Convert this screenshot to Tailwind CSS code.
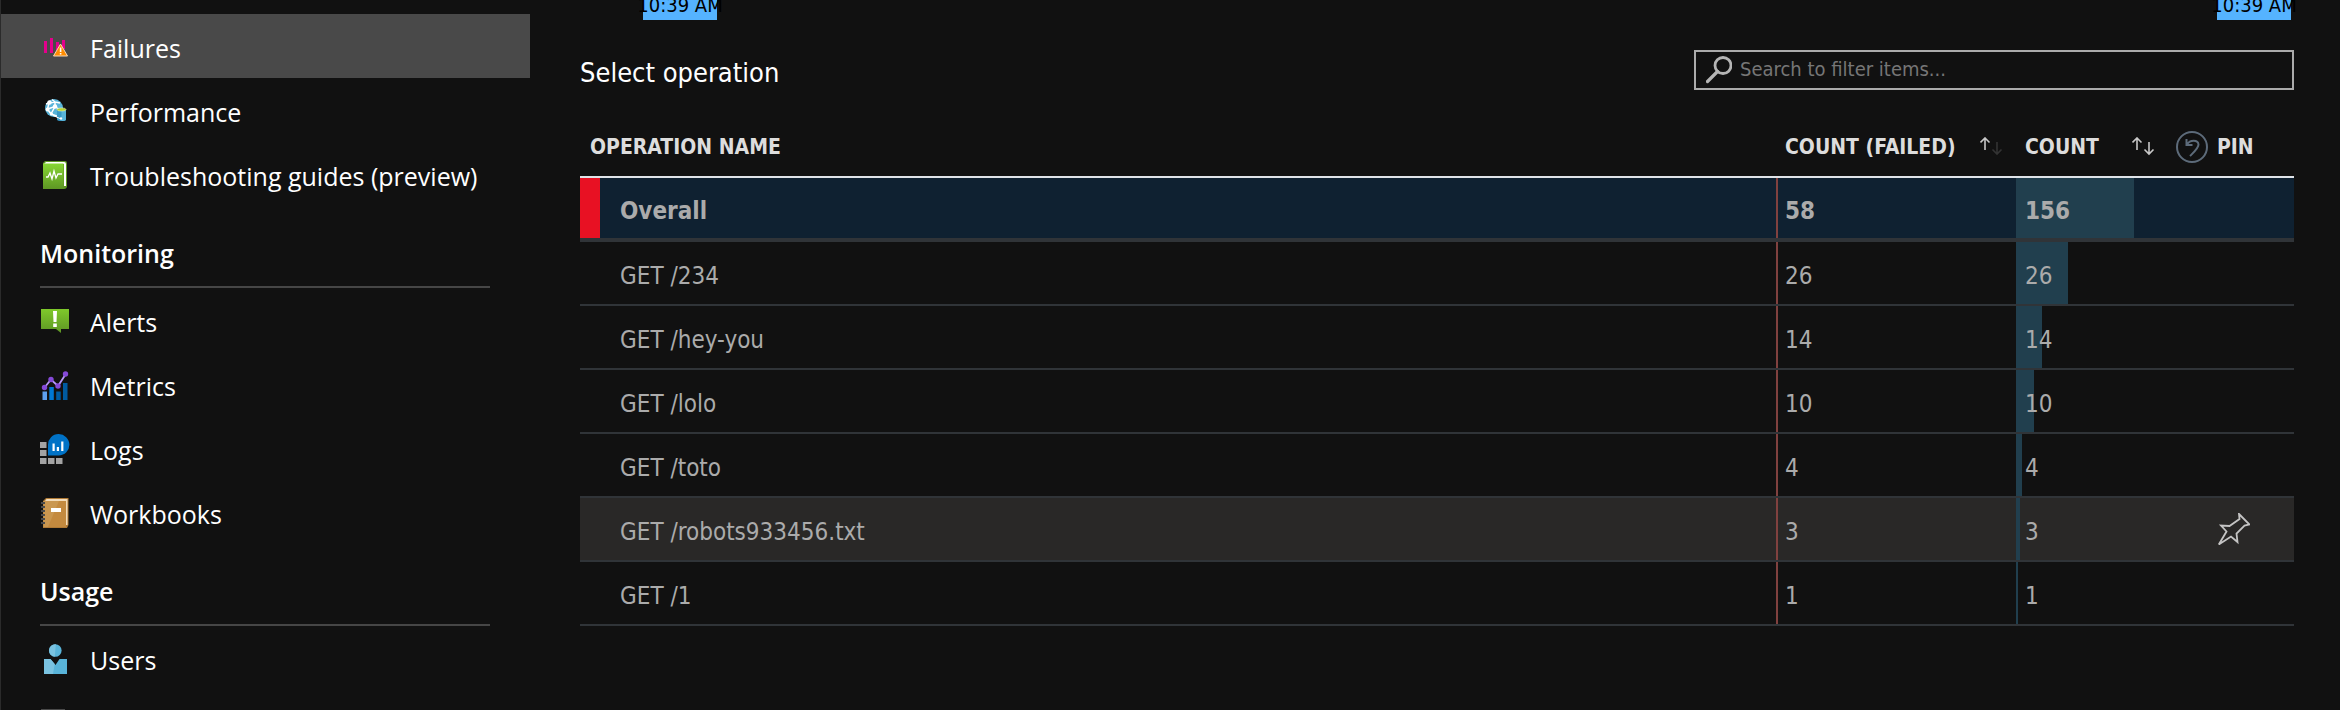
<!DOCTYPE html>
<html lang="en">
<head>
<meta charset="utf-8">
<title>Failures</title>
<script src="https://cdn.jsdelivr.net/npm/@tailwindcss/browser@4"></script>
</head>
<body class="flex h-screen overflow-hidden bg-[#111111] text-white font-['Open_Sans','Noto_Sans',sans-serif]">

<nav class="w-[530px] shrink-0 border-l border-[#2b2b2b] pt-3.5 text-[25px]" aria-label="Resource menu">
  <ul>
    <li><a href="#failures" aria-current="page" class="flex h-16 items-center gap-5 bg-[#494949] pl-[39px] pt-0.5">
      <svg class="size-[30px] shrink-0" viewBox="0 0 30 30" aria-hidden="true">
        <path fill="#e3008c" d="M4 9h3v12H4zM10 6h3v15h-3zM16 10h3v8h-3zM22 8h3v9h-3z"/>
        <path d="M20.500 12 27.500 24h-14z" fill="#ff8c00" stroke="#f9d9b5" stroke-width="1" stroke-linejoin="round"/>
        <path d="M19.800 15.500h1.600v4.500h-1.600zM19.800 21h1.600v1.600h-1.600z" fill="#fff"/>
      </svg><span class="pt-1">Failures</span></a></li>
    <li><a href="#performance" class="flex h-16 items-center gap-5 pl-[39px] pt-0.5">
      <svg class="size-[30px] shrink-0" viewBox="0 0 30 30" aria-hidden="true">
        <circle cx="14" cy="12" r="9" fill="#59b4d9"/>
        <path d="M9 7 15 6 20 7M9 7 7.500 13 15 10.500 20 14M15 6 15 10.500M7.500 13 11 18 18 20.500M15 10.500 11 18M12 3.500 15 6M9 7 6 8" fill="none" stroke="#fff" stroke-width="1.500"/>
        <g fill="#fff"><circle cx="9.500" cy="6.500" r="2.200"/><circle cx="15" cy="10.500" r="2.200"/><circle cx="7.500" cy="13.500" r="1.900"/><circle cx="11.500" cy="18" r="1.600"/></g>
        <path d="M17 14v9.500c0 2 9 2 9 0V14z" fill="#3999c6"/><path d="M21.500 14v11c2.500 0 4.500-.5 4.500-1.500V14z" fill="#59b4d9"/>
        <ellipse cx="21.500" cy="13.500" rx="4.500" ry="1.600" fill="#b8d432" stroke="#e8f3c2" stroke-width=".6"/>
        <path d="M13 19.500 20 22.500" stroke="#fff" stroke-width="1"/><circle cx="21" cy="22.500" r="1.200" fill="#fff"/>
      </svg><span class="pt-1">Performance</span></a></li>
    <li><a href="#guides" class="flex h-16 items-center gap-5 pl-[39px] pt-0.5">
      <svg class="size-[30px] shrink-0" viewBox="0 0 30 30" aria-hidden="true">
        <defs><linearGradient id="book" x1="0" y1="0" x2="0" y2="1"><stop offset="0" stop-color="#86d633"/><stop offset="1" stop-color="#5e9624"/></linearGradient></defs>
        <path d="M5 1h20q2 0 2 2v23q0 3-3 3H3V3z" fill="#5e9624"/>
        <path d="M6 2h18q2 0 2 2v22h-2V4H4z" fill="#fff"/>
        <path d="M3 3.500h20.500V29H3z" fill="url(#book)"/>
        <path d="M6 17h2l2-4 2 6 2-8 2 7 2-4h4" fill="none" stroke="#fff" stroke-width="1.300"/>
      </svg><span class="pt-1">Troubleshooting guides (preview)</span></a></li>
  </ul>

  <h2 class="ml-[39px] mr-10 flex h-[82px] items-end border-b-2 border-[#464646] pb-3.5 font-semibold">Monitoring</h2>
  <ul>
    <li><a href="#alerts" class="flex h-16 items-center gap-5 pl-[39px] pt-0.5">
      <svg class="size-[30px] shrink-0" viewBox="0 0 30 30" aria-hidden="true">
        <defs><linearGradient id="alert" x1="0" y1="0" x2="0" y2="1"><stop offset="0" stop-color="#7fc92b"/><stop offset="1" stop-color="#5e9624"/></linearGradient></defs>
        <path d="M1 3h28v20h-8v4l-5-4H1z" fill="url(#alert)"/>
        <path d="M13 5h4l-.5 11h-3zM13.200 17.500h3.600V21h-3.600z" fill="#fff"/>
      </svg><span class="pt-1">Alerts</span></a></li>
    <li><a href="#metrics" class="flex h-16 items-center gap-5 pl-[39px] pt-0.5">
      <svg class="size-[30px] shrink-0" viewBox="0 0 30 30" aria-hidden="true">
        <path fill="#5ea0ef" d="M2.500 21.500h4.500V30H2.500z"/><path fill="#0078d4" d="M9.300 17h4.500v13H9.300z"/><path fill="#005ba1" d="M16.200 21.500h4.500V30h-4.500zM23 13h4.500v17H23z"/>
        <path d="M4.500 17.500 11 9.500 18 16 25.500 4.500" fill="none" stroke="#b796f9" stroke-width="1.800"/>
        <g fill="#8549d8"><circle cx="4.500" cy="17.500" r="2.700"/><circle cx="11" cy="9.500" r="2.700"/><circle cx="18" cy="16" r="2.700"/><circle cx="25.500" cy="4" r="2.700"/></g>
      </svg><span class="pt-1">Metrics</span></a></li>
    <li><a href="#logs" class="flex h-16 items-center gap-5 pl-[39px] pt-0.5">
      <svg class="size-[30px] shrink-0" viewBox="0 0 30 30" aria-hidden="true">
        <path fill="#a3a3a3" d="M0 8h6.500v6H0zM0 16h6.500v6H0zM0 24h6.500v6H0zM8 24h6.500v6H8zM16 24h6.500v6H16z"/>
        <path d="M8 21.500V11A10.700 10.700 0 1 1 18.700 21.500z" fill="#0072c6"/>
        <path fill="#fff" d="M12.500 9.500h2.200V17h-2.200zM16.800 13H19v4h-2.200zM21.200 7.500h2.200V17h-2.200z"/>
      </svg><span class="pt-1">Logs</span></a></li>
    <li><a href="#workbooks" class="flex h-16 items-center gap-5 pl-[39px] pt-0.5">
      <svg class="size-[30px] shrink-0" viewBox="0 0 30 30" aria-hidden="true">
        <path d="M6 0h22.500v27L27 30H3V3z" fill="#b07a35"/>
        <path d="M6.500 1H27.500V27h-2V3H5z" fill="#f3dcba"/>
        <path d="M3.500 3h22.500V29H3.500z" fill="#c48a3f"/><path d="M3.500 3H19L8 29H3.500z" fill="#ca9750"/>
        <path d="M11 10h10v4H11z" fill="#fff"/>
        <path d="M1 5h4M1 9h4M1 13h4M1 17h4M1 21h4M1 25h4" stroke="#4a4a4a" stroke-width="2"/>
      </svg><span class="pt-1">Workbooks</span></a></li>
  </ul>

  <h2 class="ml-[39px] mr-10 flex h-[82px] items-end border-b-2 border-[#464646] pb-3.5 font-semibold">Usage</h2>
  <ul>
    <li><a href="#users" class="flex h-16 items-center gap-5 pl-[39px] pt-0.5">
      <svg class="size-[30px] shrink-0" viewBox="0 0 30 30" aria-hidden="true">
        <circle cx="15.300" cy="6.500" r="6.300" fill="#59b4d9"/><path d="M15.800.2a6.300 6.300 0 1 0-1 12.600z" fill="#7ac3e1"/>
        <path d="M4 15h6.500l5 6 4-6H27v15H4z" fill="#59b4d9"/><path d="M4 15h6.500l4.200 5L13 30H4z" fill="#7ac3e1"/>
      </svg><span class="pt-1">Users</span></a></li>
    <li><a href="#sessions" aria-label="Sessions" class="flex h-16 items-center gap-5 pl-[39px] pt-0.5">
      <svg class="size-[30px] shrink-0" viewBox="0 0 30 30" aria-hidden="true"><path d="M1 1h24v28H1z" fill="#4a4a4a"/></svg></a></li>
  </ul>
</nav>

<main class="min-w-0 flex-1 pl-[50px] pr-[46px] font-['DejaVu_Sans_Condensed','DejaVu_Sans',sans-serif] [font-stretch:condensed]">
  <div class="-mt-2 flex h-7 justify-between pl-[63px] pr-[3px] text-xl leading-[26px] text-black">
    <div class="flex w-[74px] justify-center whitespace-nowrap bg-[#55b3ff]"><span>10:39 AM</span></div>
    <div class="flex w-[74px] justify-center whitespace-nowrap bg-[#55b3ff]"><span>10:39 AM</span></div>
  </div>

  <div class="mt-[30px] flex h-10 items-center justify-between">
    <h1 class="pt-1.5 text-[27px] leading-10">Select operation</h1>
    <label class="flex h-10 w-[600px] items-center gap-2 border-2 border-[#ababab] px-2.5">
      <svg class="h-7 w-[26px] shrink-0" viewBox="0 0 26 28" fill="none" stroke="#b5b5b5" aria-hidden="true"><circle cx="17" cy="9.500" r="8" stroke-width="2.800"/><path d="M11.500 15.500 1.500 25.500" stroke-width="3.200" stroke-linecap="round"/></svg>
      <input type="search" aria-label="Search to filter items" placeholder="Search to filter items..." class="min-w-0 flex-1 bg-transparent pb-0.5 text-xl text-white outline-none placeholder:text-[#767676]">
    </label>
  </div>

  <table class="mt-7 w-full table-fixed border-separate border-spacing-0 text-left text-2xl text-[#ababab]">
    <colgroup><col><col class="w-[240px]"><col class="w-[194px]"><col class="w-[84px]"></colgroup>
    <thead class="text-[21px] text-[#dddddd]">
      <tr class="h-[60px] *:border-b-2 *:border-[#dfe3e8]">
        <th scope="col" class="p-0 pl-2.5 font-bold">OPERATION NAME</th>
        <th scope="col" class="p-0 pl-[9px] pr-3 font-bold">
          <button type="button" class="flex w-full items-center justify-between"><span>COUNT (FAILED)</span>
          <svg class="h-5 w-6" viewBox="0 0 24 20" fill="none" stroke-width="1.600" aria-hidden="true"><path stroke="#c8c8c8" d="M5 13V1M.5 5.500 5 1l4.500 4.500"/><path stroke="#333" d="M17 5v12M12.500 12.500 17 17l4.500-4.500"/></svg></button></th>
        <th scope="col" class="p-0 pl-[9px] font-bold">
          <div class="flex items-center justify-between pr-0.5"><button type="button" class="flex w-[131px] items-center justify-between"><span>COUNT</span>
          <svg class="h-5 w-6" viewBox="0 0 24 20" fill="none" stroke="#c8c8c8" stroke-width="1.600" aria-hidden="true"><path d="M5 13V1M.5 5.500 5 1l4.500 4.500M17 5v12M12.500 12.500 17 17l4.500-4.500"/></svg></button>
          <button type="button" aria-label="Reset sort"><svg class="size-8" viewBox="0 0 32 32" fill="none" stroke="#5d6b7a" stroke-width="2" aria-hidden="true"><circle cx="16" cy="16" r="15"/><path d="M10.500 8v6h6M11 13.500C14 8.500 22 8.500 22.500 13.500 22.500 17 19 20 14 25"/></svg></button></div></th>
        <th scope="col" class="p-0 pl-[7px] font-bold">PIN</th>
      </tr>
    </thead>
    <tbody>
      <tr class="h-16 bg-[#0f2131] font-bold *:border-b-4 *:border-[#303438]">
        <td class="p-0"><div class="flex h-15 items-center border-l-20 border-[#e81123] pl-5 pt-1.5">Overall</div></td>
        <td class="p-0"><div class="flex h-15 items-center border-l-2 border-[#80413f] pl-[7px] pt-1.5">58</div></td>
        <td class="p-0"><div class="relative flex h-15 items-center pl-[9px] pt-1.5"><div class="absolute inset-y-0 left-0 bg-[#213f4e]" style="width:118px"></div><span class="relative">156</span></div></td>
        <td class="p-0"></td>
      </tr>
      <tr class="h-16 *:border-b-2 *:border-[#303438]">
        <td class="p-0"><div class="flex h-[62px] items-center pl-10 pt-1.5">GET /234</div></td>
        <td class="p-0"><div class="flex h-[62px] items-center border-l-2 border-[#80413f] pl-[7px] pt-1.5">26</div></td>
        <td class="p-0"><div class="relative flex h-[62px] items-center pl-[9px] pt-1.5"><div class="absolute inset-y-0 left-0 bg-[#213f4e]" style="width:52px"></div><span class="relative">26</span></div></td>
        <td class="p-0"></td>
      </tr>
      <tr class="h-16 *:border-b-2 *:border-[#303438]">
        <td class="p-0"><div class="flex h-[62px] items-center pl-10 pt-1.5">GET /hey-you</div></td>
        <td class="p-0"><div class="flex h-[62px] items-center border-l-2 border-[#80413f] pl-[7px] pt-1.5">14</div></td>
        <td class="p-0"><div class="relative flex h-[62px] items-center pl-[9px] pt-1.5"><div class="absolute inset-y-0 left-0 bg-[#213f4e]" style="width:26px"></div><span class="relative">14</span></div></td>
        <td class="p-0"></td>
      </tr>
      <tr class="h-16 *:border-b-2 *:border-[#303438]">
        <td class="p-0"><div class="flex h-[62px] items-center pl-10 pt-1.5">GET /lolo</div></td>
        <td class="p-0"><div class="flex h-[62px] items-center border-l-2 border-[#80413f] pl-[7px] pt-1.5">10</div></td>
        <td class="p-0"><div class="relative flex h-[62px] items-center pl-[9px] pt-1.5"><div class="absolute inset-y-0 left-0 bg-[#213f4e]" style="width:18px"></div><span class="relative">10</span></div></td>
        <td class="p-0"></td>
      </tr>
      <tr class="h-16 *:border-b-2 *:border-[#303438]">
        <td class="p-0"><div class="flex h-[62px] items-center pl-10 pt-1.5">GET /toto</div></td>
        <td class="p-0"><div class="flex h-[62px] items-center border-l-2 border-[#80413f] pl-[7px] pt-1.5">4</div></td>
        <td class="p-0"><div class="relative flex h-[62px] items-center pl-[9px] pt-1.5"><div class="absolute inset-y-0 left-0 bg-[#213f4e]" style="width:6px"></div><span class="relative">4</span></div></td>
        <td class="p-0"></td>
      </tr>
      <tr class="h-16 bg-[#292827] *:border-b-2 *:border-[#303438]">
        <td class="p-0"><div class="flex h-[62px] items-center pl-10 pt-1.5">GET /robots933456.txt</div></td>
        <td class="p-0"><div class="flex h-[62px] items-center border-l-2 border-[#80413f] pl-[7px] pt-1.5">3</div></td>
        <td class="p-0"><div class="relative flex h-[62px] items-center pl-[9px] pt-1.5"><div class="absolute inset-y-0 left-0 bg-[#213f4e]" style="width:4px"></div><span class="relative">3</span></div></td>
        <td class="p-0 pl-2"><button type="button" aria-label="Pin GET /robots933456.txt" class="flex"><svg class="size-8" viewBox="0 0 32 32" fill="none" stroke="#c4c4c4" stroke-width="1.800" aria-hidden="true"><path d="M21 1 31.500 11.500 26.500 12.500 18.500 20.500 19.500 29 13 23.500.8 31.500 8.500 18.500 3 12.500 11.500 13 21.500 6z"/></svg></button></td>
      </tr>
      <tr class="h-16 *:border-b-2 *:border-[#303438]">
        <td class="p-0"><div class="flex h-[62px] items-center pl-10 pt-1.5">GET /1</div></td>
        <td class="p-0"><div class="flex h-[62px] items-center border-l-2 border-[#80413f] pl-[7px] pt-1.5">1</div></td>
        <td class="p-0"><div class="relative flex h-[62px] items-center pl-[9px] pt-1.5"><div class="absolute inset-y-0 left-0 bg-[#213f4e]" style="width:2px"></div><span class="relative">1</span></div></td>
        <td class="p-0"></td>
      </tr>
    </tbody>
  </table>
</main>
</body>
</html>
